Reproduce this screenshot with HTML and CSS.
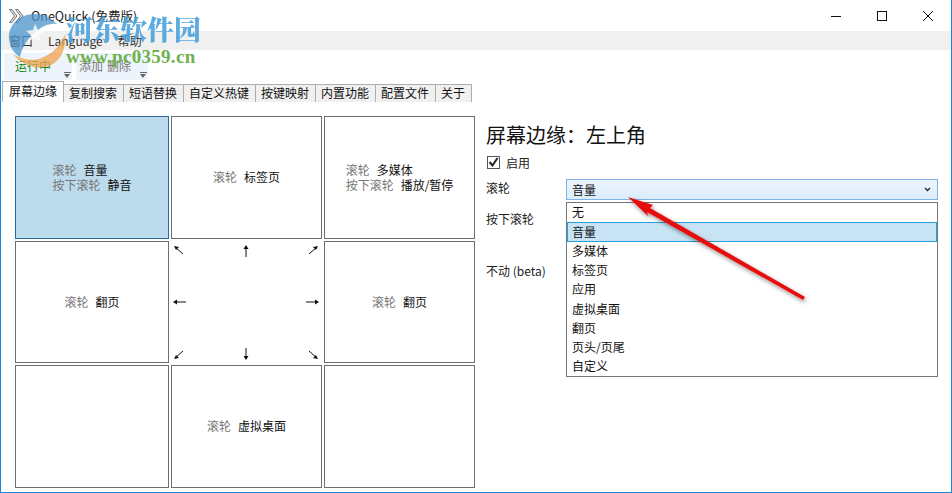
FILE: index.html
```html
<!DOCTYPE html>
<html lang="zh-CN">
<head>
    <meta charset="UTF-8">
    <title>OneQuick (免费版)</title>
    <link rel="stylesheet" href="styles.css">
</head>
<body>

<div class="window">
    <!-- 标题栏 -->
    <div class="titlebar">
        <svg class="app-icon" width="15" height="14" viewBox="0 0 15 14">
            <path d="M0.500 0.500h2.500l5 6.500-5 6.500H0.500l5-6.500zM6.500 0.500h2.500l5 6.500-5 6.500H6.500l5-6.500z" fill="#ddd" stroke="#777" stroke-width="1"/>
        </svg>
        <span class="app-title">OneQuick (免费版)</span>
        <div class="win-buttons">
            <svg width="10" height="10" viewBox="0 0 10 10"><path d="M0 5.500h10" stroke="#111"/></svg>
            <svg width="10" height="10" viewBox="0 0 10 10"><rect x="0.500" y="0.500" width="9" height="9" fill="none" stroke="#111"/></svg>
            <svg width="10" height="10" viewBox="0 0 10 10"><path d="M0 0l10 10M10 0L0 10" stroke="#111"/></svg>
        </div>
    </div>

    <div class="menubar">
        <span>窗口</span>
        <span>Language</span>
        <span>帮助</span>
    </div>

    <div class="toolbar">
        <div class="tool-group tool-run"><span class="run-text">运行中</span><i class="more"></i></div>
        <div class="tool-group tool-edit"><span>添加</span><span>删除</span><i class="more"></i></div>
    </div>

    <div class="tabs">
        <div class="tab active">屏幕边缘</div>
        <div class="tab">复制搜索</div>
        <div class="tab">短语替换</div>
        <div class="tab">自定义热键</div>
        <div class="tab">按键映射</div>
        <div class="tab">内置功能</div>
        <div class="tab">配置文件</div>
        <div class="tab">关于</div>
    </div>

    <div class="content">
        <div class="grid">
            <div class="cell selected">
                <div class="rows">
                    <div><span class="key">滚轮</span><span class="val">音量</span></div>
                    <div><span class="key">按下滚轮</span><span class="val">静音</span></div>
                </div>
            </div>
            <div class="cell"><div><span class="key">滚轮</span><span class="val">标签页</span></div></div>
            <div class="cell">
                <div class="rows">
                    <div><span class="key">滚轮</span><span class="val">多媒体</span></div>
                    <div><span class="key">按下滚轮</span><span class="val">播放/暂停</span></div>
                </div>
            </div>
            <div class="cell"><div><span class="key">滚轮</span><span class="val">翻页</span></div></div>
            <div class="arrows">
                <svg width="12" height="12" viewBox="0 0 12 12"><path d="M2 2l8 7"/><path class="arrow-head" d="M1 1l5 1-3 3z"/></svg>
                <svg width="12" height="12" viewBox="0 0 12 12"><path d="M6 1v11"/><path class="arrow-head" d="M6 0l2.500 4h-5z"/></svg>
                <svg width="12" height="12" viewBox="0 0 12 12"><path d="M10 2L2 9"/><path class="arrow-head" d="M11 1L6 2l3 3z"/></svg>
                <svg width="13" height="12" viewBox="0 0 13 12"><path d="M1 6h12"/><path class="arrow-head" d="M0 6l4-2.500v5z"/></svg>
                <span></span>
                <svg width="13" height="12" viewBox="0 0 13 12"><path d="M0 6h12"/><path class="arrow-head" d="M13 6L9 3.500v5z"/></svg>
                <svg width="12" height="12" viewBox="0 0 12 12"><path d="M2 10l8-7"/><path class="arrow-head" d="M1 11l5-1-3-3z"/></svg>
                <svg width="12" height="12" viewBox="0 0 12 12"><path d="M6 0v11"/><path class="arrow-head" d="M6 12l2.500-4h-5z"/></svg>
                <svg width="12" height="12" viewBox="0 0 12 12"><path d="M10 10L2 3"/><path class="arrow-head" d="M11 11l-5-1 3-3z"/></svg>
            </div>
            <div class="cell"><div><span class="key">滚轮</span><span class="val">翻页</span></div></div>
            <div class="cell"></div>
            <div class="cell"><div><span class="key">滚轮</span><span class="val">虚拟桌面</span></div></div>
            <div class="cell"></div>
        </div>

        <div class="panel">
            <h2>屏幕边缘：左上角</h2>
            <label class="check"><i class="box"><svg width="11" height="10" viewBox="0 0 11 10"><path d="M1.500 5l3 3.500L9.500 1" fill="none" stroke="#222" stroke-width="2"/></svg></i>启用</label>
            <div class="form-row">
                <span class="form-label">滚轮</span>
                <div class="select">音量<svg width="7" height="5" viewBox="0 0 7 5"><path d="M1 1l2.500 2.500L6 1" fill="none" stroke="#222" stroke-width="1.300"/></svg></div>
            </div>
            <div class="form-row"><span class="form-label">按下滚轮</span></div>
            <div class="form-row form-row-last"><span class="form-label">不动 (beta)</span></div>
        </div>
    </div>

    <!-- 下拉列表 -->
    <ul class="dropdown">
        <li>无</li>
        <li class="current">音量</li>
        <li>多媒体</li>
        <li>标签页</li>
        <li>应用</li>
        <li>虚拟桌面</li>
        <li>翻页</li>
        <li>页头/页尾</li>
        <li>自定义</li>
    </ul>

    <!-- 红色箭头 -->
    <svg class="red-arrow" width="200" height="120" viewBox="0 0 200 120">
        <defs>
            <filter id="arrow-shadow" x="-20%" y="-20%" width="140%" height="150%">
                <feDropShadow dx="1" dy="2" stdDeviation="2" flood-color="#000" flood-opacity="0.45"/>
            </filter>
        </defs>
        <path d="M0 0L25 8 22 11 177 100 175 103 19 15 20 19z" fill="#e8100f" filter="url(#arrow-shadow)"/>
    </svg>

    <!-- 水印 -->
    <div class="watermark">
        <svg class="wm-logo" width="62" height="56" viewBox="0 0 62 56">
            <path d="M27 0C11 0 0 11 1 25c1 9 5 14 11 18 2-10 8-20 18-27 6-5 13-7 19-6C43 4 36 0 27 0z" fill="#4b94cc" opacity="0.75"/>
            <path d="M5 40c8 10 22 17 36 12 11-4 18-17 16-32-4 12-14 21-26 25-9 2-18 0-26-5z" fill="#efa24e" opacity="0.75"/>
            <path d="M27 10l3 6 6 1-5 4 1 6-5-3-6 3 2-6-5-4 7-1z" fill="#fff" opacity="0.8"/>
        </svg>
        <div class="wm-name">河东软件园</div>
        <div class="wm-url">www.pc0359.cn</div>
    </div>
</div>

</body>
</html>
```

FILE: styles.css
```css
html, body {
    margin: 0;
    padding: 0;
}
body {
    font-family: "Noto Sans CJK SC", "Noto Sans", sans-serif;
    font-size: 12px;
    color: #111;
    background-color: #fff;
}
.window {
    position: relative;
    width: 952px;
    height: 493px;
    overflow: hidden;
    box-sizing: border-box;
    border-left: 1px solid #1c86d8;
    border-right: 1px solid #1c86d8;
    border-bottom: 1px solid #1c86d8;
}
.titlebar {
    height: 31px;
    display: flex;
    align-items: center;
    padding-left: 8px;
}
.app-icon {
    margin-right: 7px;
}
.app-title {
    font-size: 12.500px;
    color: #222;
}
.win-buttons {
    margin-left: auto;
    display: flex;
    gap: 36px;
    padding-right: 18px;
}
.menubar {
    height: 19px;
    background-color: #f0f0f0;
    display: flex;
    align-items: center;
    gap: 15px;
    padding-left: 8px;
    padding-bottom: 1px;
    box-sizing: border-box;
    color: #333;
}
.toolbar {
    height: 31px;
    display: flex;
    gap: 4px;
    padding-left: 3px;
    box-sizing: border-box;
    padding-top: 3px;
}
.tool-group {
    position: relative;
    height: 27px;
    background-color: #eef4fb;
    border-radius: 3px;
    display: flex;
    align-items: center;
    gap: 4px;
    color: #777;
    box-sizing: border-box;
    padding-bottom: 3px;
}
.tool-run {
    width: 68px;
    padding-left: 11px;
}
.tool-edit {
    width: 72px;
    padding-left: 3px;
}
.run-text {
    color: #0a8a0a;
}
.more {
    position: absolute;
    right: 2px;
    bottom: 2px;
    width: 0;
    height: 0;
    border-left: 3.500px solid transparent;
    border-right: 3.500px solid transparent;
    border-top: 4px solid #666;
}
.more::before {
    content: "";
    position: absolute;
    left: -3.500px;
    top: -6px;
    width: 7px;
    height: 1px;
    background-color: #666;
}
.tabs {
    display: flex;
    align-items: flex-end;
    height: 21px;
    padding-left: 1px;
}
.tab {
    height: 18px;
    line-height: 16px;
    padding: 0 6px 0 5px;
    background-color: #f0f0f0;
    border: 1px solid #adadad;
    border-left: none;
    border-bottom: none;
    box-sizing: border-box;
}
.tab.active {
    height: 21px;
    line-height: 18px;
    padding: 0 6px;
    background-color: #fff;
    border-left: 1px solid #adadad;
}
.content {
    display: flex;
    padding: 14px 0 0 14px;
}
.grid {
    display: grid;
    grid-template-columns: 154px 151px 151px;
    grid-template-rows: 123px 122px 123px;
    column-gap: 2px;
    row-gap: 2px;
}
.cell {
    border: 1px solid #6e6e6e;
    display: flex;
    align-items: center;
    justify-content: center;
    box-sizing: border-box;
    padding-bottom: 2px;
}
.cell.selected {
    background-color: #bcdcee;
    border-color: #2a6a9a;
}
.rows {
    line-height: 15px;
}
.key {
    color: #777;
    margin-right: 7px;
}
.val {
    color: #111;
}
.arrows {
    display: grid;
    grid-template-columns: 1fr 1fr 1fr;
    grid-template-rows: 1fr 1fr 1fr;
    padding: 4px 3px 3px 2px;
}
.arrows svg:nth-child(3n+2) {
    justify-self: center;
}
.arrows svg:nth-child(3n) {
    justify-self: end;
}
.arrows svg:nth-child(n+4) {
    align-self: center;
}
.arrows svg:nth-child(n+7) {
    align-self: end;
}
.arrows svg path {
    fill: none;
    stroke: #111;
    stroke-width: 1;
}
.arrows svg path.arrow-head {
    fill: #111;
    stroke: none;
}
.panel {
    flex: 1;
    padding-left: 11px;
}
.panel h2 {
    margin: 5px 0 0 0;
    font-size: 20px;
    font-weight: normal;
    line-height: 27px;
}
.check {
    display: flex;
    align-items: center;
    gap: 6px;
    margin-top: 6px;
    color: #222;
    height: 16px;
}
.box {
    display: flex;
    align-items: center;
    justify-content: center;
    width: 13px;
    height: 13px;
    border: 1px solid #555;
    box-sizing: border-box;
    margin-left: 1px;
}
.form-row {
    display: flex;
    align-items: flex-start;
    margin-top: 10px;
    height: 20px;
    line-height: 16px;
}
.form-row + .form-row {
    margin-top: 11px;
}
.form-row-last {
    padding-top: 21px;
}
.form-label {
    width: 80px;
    color: #222;
}
.select {
    width: 372px;
    height: 21px;
    margin-top: -1px;
    box-sizing: border-box;
    border: 1px solid #7eb4ea;
    background: linear-gradient(#ecf4fc, #dcecfc);
    padding-left: 5px;
    line-height: 18px;
    display: flex;
    justify-content: space-between;
    align-items: center;
    padding-right: 6px;
}
.dropdown {
    position: absolute;
    left: 565px;
    top: 202px;
    width: 372px;
    height: 175px;
    box-sizing: border-box;
    margin: 0;
    padding: 0;
    list-style: none;
    background-color: #fff;
    border: 1px solid #767676;
}
.dropdown li {
    height: 19.200px;
    line-height: 18px;
    padding-left: 5px;
    box-sizing: border-box;
}
.dropdown li:first-child {
    height: 19px;
}
.dropdown li.current {
    height: 20px;
    background-color: #c8e4f4;
    border: 1px solid #26a0da;
    padding-left: 4px;
    line-height: 17px;
}
.red-arrow {
    position: absolute;
    left: 627px;
    top: 197px;
}
.watermark {
    position: absolute;
    left: 0;
    top: 0;
    width: 210px;
    height: 72px;
    pointer-events: none;
}
.wm-logo {
    position: absolute;
    left: 7px;
    top: 14px;
}
.wm-name {
    position: absolute;
    left: 65px;
    top: 11px;
    font-family: "Noto Serif CJK SC", "Noto Sans CJK SC", sans-serif;
    font-size: 27px;
    font-weight: 900;
    line-height: 36px;
    color: #4da3dc;
    opacity: 0.9;
    white-space: nowrap;
}
.wm-url {
    position: absolute;
    left: 65px;
    top: 47px;
    font-family: "Liberation Serif", serif;
    font-size: 19px;
    font-weight: 700;
    line-height: 20px;
    color: #6fb24e;
    letter-spacing: 0.300px;
    white-space: nowrap;
}
```
